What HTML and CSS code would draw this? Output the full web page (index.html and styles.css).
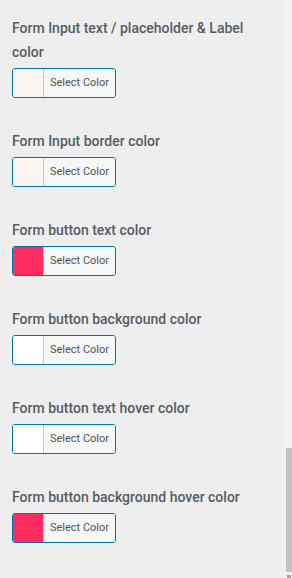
FILE: index.html
```html
<!DOCTYPE html>
<html lang="en">
<head>
<meta charset="UTF-8">
<title>Form colors</title>
<link rel="stylesheet" href="styles.css">
</head>
<body>
<div class="layout">
  <div class="panel">
    <div class="control">
      <span class="control-title">Form Input text / placeholder &amp; Label color</span>
      <button class="color-result"><span class="swatch swatch-blush"></span><span class="result-text">Select Color</span></button>
    </div>
    <div class="control">
      <span class="control-title">Form Input border color</span>
      <button class="color-result"><span class="swatch swatch-blush"></span><span class="result-text">Select Color</span></button>
    </div>
    <div class="control">
      <span class="control-title">Form button text color</span>
      <button class="color-result"><span class="swatch swatch-rose"></span><span class="result-text">Select Color</span></button>
    </div>
    <div class="control">
      <span class="control-title">Form button background color</span>
      <button class="color-result"><span class="swatch swatch-white"></span><span class="result-text">Select Color</span></button>
    </div>
    <div class="control">
      <span class="control-title">Form button text hover color</span>
      <button class="color-result"><span class="swatch swatch-white"></span><span class="result-text">Select Color</span></button>
    </div>
    <div class="control">
      <span class="control-title">Form button background hover color</span>
      <button class="color-result"><span class="swatch swatch-rose"></span><span class="result-text">Select Color</span></button>
    </div>
  </div>
  <div class="scroll-track">
    <div class="scroll-thumb"></div>
    <div class="scroll-arrow"></div>
  </div>
</div>
</body>
</html>
```

FILE: styles.css
```css
:root{
  --bg: #eeeeee;
  --title: #555d66;
  --blue: #0073aa;
  --rose: #fe2c5f;
  --blush: #fcf3f3;
}
*{ box-sizing: border-box; }
html,body{
  margin:0; padding:0; background:var(--bg);
  font-family: Roboto, "Noto Sans", sans-serif;
  height: 578px; overflow: hidden;
}
.layout{ display:flex; height:578px; }
.panel{ flex:1; padding: 16px 12px 0; }

.control{ margin-bottom: 31px; }
.control-title{
  display:block; font-size: 14px; line-height: 24px; font-weight: 500;
  color: var(--title); margin-bottom: 4px;
}

.color-result{
  display:flex; align-items:stretch; padding:0; margin:0;
  width: 104px; height: 30px; border: 1px solid var(--blue); border-radius: 3px;
  background: #f6f7f7; overflow:hidden; cursor:pointer; font-family: inherit;
}
.swatch{ width: 30px; flex-shrink:0; }
.swatch-blush{ background: var(--blush); }
.swatch-rose{ background: var(--rose); }
.swatch-white{ background: #fff; }
.result-text{
  flex:1; border-left: 1px solid #c8c8c8; background:#f6f7f7;
  font-size: 11px; line-height: 28px; color: #555; text-align:center;
  white-space: nowrap;
}

.scroll-track{
  width: 8px; background: #f1f1f1; display:flex; flex-direction:column;
  align-items:flex-end;
}
.scroll-thumb{ width: 6px; height: 124px; margin-top: 448px; background: #c1c1c1; }
.scroll-arrow{ width: 4px; height: 3px; margin: 3px 1px 0 0; background: #a3a3a3; }
```
